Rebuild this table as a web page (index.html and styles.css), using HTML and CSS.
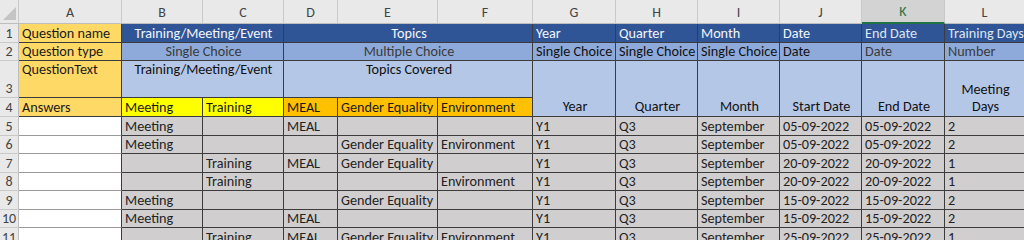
FILE: index.html
```html
<!DOCTYPE html>
<html>
<head>
<meta charset="utf-8">
<link rel="stylesheet" href="styles.css">
</head>
<body>
<div class="sheet">
  <div class="ch corner"><span class="tri"></span></div>
  <div class="ch">A</div><div class="ch">B</div><div class="ch">C</div><div class="ch">D</div><div class="ch">E</div><div class="ch">F</div><div class="ch">G</div><div class="ch">H</div><div class="ch">I</div><div class="ch">J</div><div class="ch sel">K</div><div class="ch">L</div>

  <div class="rh">1</div>
  <div class="c gold">Question name</div>
  <div class="c dark center span2">Training/Meeting/Event</div>
  <div class="c dark center span3">Topics</div>
  <div class="c dark strong">Year</div><div class="c dark strong">Quarter</div><div class="c dark strong">Month</div><div class="c dark strong">Date</div><div class="c dark soft">End Date</div><div class="c dark soft">Training Days</div>

  <div class="rh">2</div>
  <div class="c gold">Question type</div>
  <div class="c mid center span2 grey-t">Single Choice</div>
  <div class="c mid center span3 grey-t">Multiple Choice</div>
  <div class="c mid">Single Choice</div><div class="c mid">Single Choice</div><div class="c mid">Single Choice</div><div class="c mid">Date</div><div class="c mid grey-t">Date</div><div class="c mid grey-t">Number</div>

  <div class="rh">3</div>
  <div class="c gold top">QuestionText</div>
  <div class="c light center top span2">Training/Meeting/Event</div>
  <div class="c light center top span3">Topics Covered</div>
  <div class="c light center tall">Year</div><div class="c light center tall">Quarter</div><div class="c light center tall">Month</div><div class="c light center tall">Start Date</div><div class="c light center tall">End Date</div><div class="c light center tall wrap">Meeting<br>Days</div>

  <div class="rh">4</div>
  <div class="c gold">Answers</div>
  <div class="c yellow">Meeting</div><div class="c yellow">Training</div>
  <div class="c orange">MEAL</div><div class="c orange">Gender Equality</div><div class="c orange">Environment</div>

  <div class="rh">5</div><div class="c white"></div>
  <div class="c g">Meeting</div><div class="c g"></div><div class="c g">MEAL</div><div class="c g"></div><div class="c g"></div><div class="c g">Y1</div><div class="c g">Q3</div><div class="c g">September</div><div class="c g">05-09-2022</div><div class="c g">05-09-2022</div><div class="c g">2</div>

  <div class="rh">6</div><div class="c white"></div>
  <div class="c g">Meeting</div><div class="c g"></div><div class="c g"></div><div class="c g">Gender Equality</div><div class="c g">Environment</div><div class="c g">Y1</div><div class="c g">Q3</div><div class="c g">September</div><div class="c g">05-09-2022</div><div class="c g">05-09-2022</div><div class="c g">2</div>

  <div class="rh">7</div><div class="c white"></div>
  <div class="c g"></div><div class="c g">Training</div><div class="c g">MEAL</div><div class="c g">Gender Equality</div><div class="c g"></div><div class="c g">Y1</div><div class="c g">Q3</div><div class="c g">September</div><div class="c g">20-09-2022</div><div class="c g">20-09-2022</div><div class="c g">1</div>

  <div class="rh">8</div><div class="c white"></div>
  <div class="c g"></div><div class="c g">Training</div><div class="c g"></div><div class="c g"></div><div class="c g">Environment</div><div class="c g">Y1</div><div class="c g">Q3</div><div class="c g">September</div><div class="c g">20-09-2022</div><div class="c g">20-09-2022</div><div class="c g">1</div>

  <div class="rh">9</div><div class="c white"></div>
  <div class="c g">Meeting</div><div class="c g"></div><div class="c g"></div><div class="c g">Gender Equality</div><div class="c g"></div><div class="c g">Y1</div><div class="c g">Q3</div><div class="c g">September</div><div class="c g">15-09-2022</div><div class="c g">15-09-2022</div><div class="c g">2</div>

  <div class="rh">10</div><div class="c white"></div>
  <div class="c g">Meeting</div><div class="c g"></div><div class="c g">MEAL</div><div class="c g"></div><div class="c g"></div><div class="c g">Y1</div><div class="c g">Q3</div><div class="c g">September</div><div class="c g">15-09-2022</div><div class="c g">15-09-2022</div><div class="c g">2</div>

  <div class="rh">11</div><div class="c white"></div>
  <div class="c g"></div><div class="c g">Training</div><div class="c g">MEAL</div><div class="c g">Gender Equality</div><div class="c g">Environment</div><div class="c g">Y1</div><div class="c g">Q3</div><div class="c g">September</div><div class="c g">25-09-2022</div><div class="c g">25-09-2022</div><div class="c g">1</div>
</div>
</body>
</html>
```
FILE: styles.css
```css
html, body {
  margin: 0;
  padding: 0;
  background: #ffffff;
  overflow: hidden;
}

.sheet {
  display: grid;
  grid-template-columns: 19px 103px 81px 81px 54px 100px 95px 83px 82px 82px 82px 83px 80px;
  grid-template-rows: 24px 19px 18px 37px 19px repeat(7, 18.5px);
  width: 1025px;
  font-family: Carlito, Lato, "Open Sans", sans-serif;
  font-size: 14.2px;
  color: #1a1a1a;
}

.ch {
  background: #e9e9e9;
  border-right: 1px solid #c9c9c9;
  border-bottom: 1px solid #bdbdbd;
  box-sizing: border-box;
  display: flex;
  align-items: flex-end;
  justify-content: center;
  padding-bottom: 2px;
  color: #444;
  font-size: 14px;
  line-height: 17px;
}

.ch.corner {
  position: relative;
  padding: 0;
}

.ch.corner .tri {
  position: absolute;
  right: 2px;
  bottom: 3px;
  width: 0;
  height: 0;
  border-left: 13px solid transparent;
  border-bottom: 13px solid #c4c4c4;
}

.ch.sel {
  background: #d3d3d3;
  color: #217346;
  border-bottom: 2px solid #217346;
}

.rh {
  background: #e9e9e9;
  border-right: 1px solid #bdbdbd;
  border-bottom: 1px solid #c9c9c9;
  box-sizing: border-box;
  display: flex;
  align-items: flex-end;
  justify-content: center;
  color: #444;
  font-size: 14px;
  line-height: 17px;
}

.c {
  box-sizing: border-box;
  border-right: 1px solid #3c3c3c;
  border-bottom: 1px solid #3c3c3c;
  display: flex;
  align-items: flex-end;
  padding: 0 1px 0 3px;
  line-height: 17px;
  white-space: nowrap;
  overflow: hidden;
}

.center { justify-content: center; }
.top { align-items: flex-start; }
.span2 { grid-column: span 2; }
.span3 { grid-column: span 3; }
.tall { grid-row: span 2; padding-bottom: 1px; }
.wrap { text-align: center; white-space: normal; }

.gold { background: #ffd966; }
.dark { background: #2f5597; color: #f4f6fb; }
.dark.soft { color: #dfe5f1; }
.mid { background: #8eaadb; color: #111; }
.light { background: #b4c7e7; color: #111; }
.yellow { background: #ffff00; }
.orange { background: #ffc000; }
.white { background: #ffffff; border-bottom-color: #9a9a9a; }
.g { background: #d0cece; color: #222; }
.grey-t { color: #3a3a3a; }
```
